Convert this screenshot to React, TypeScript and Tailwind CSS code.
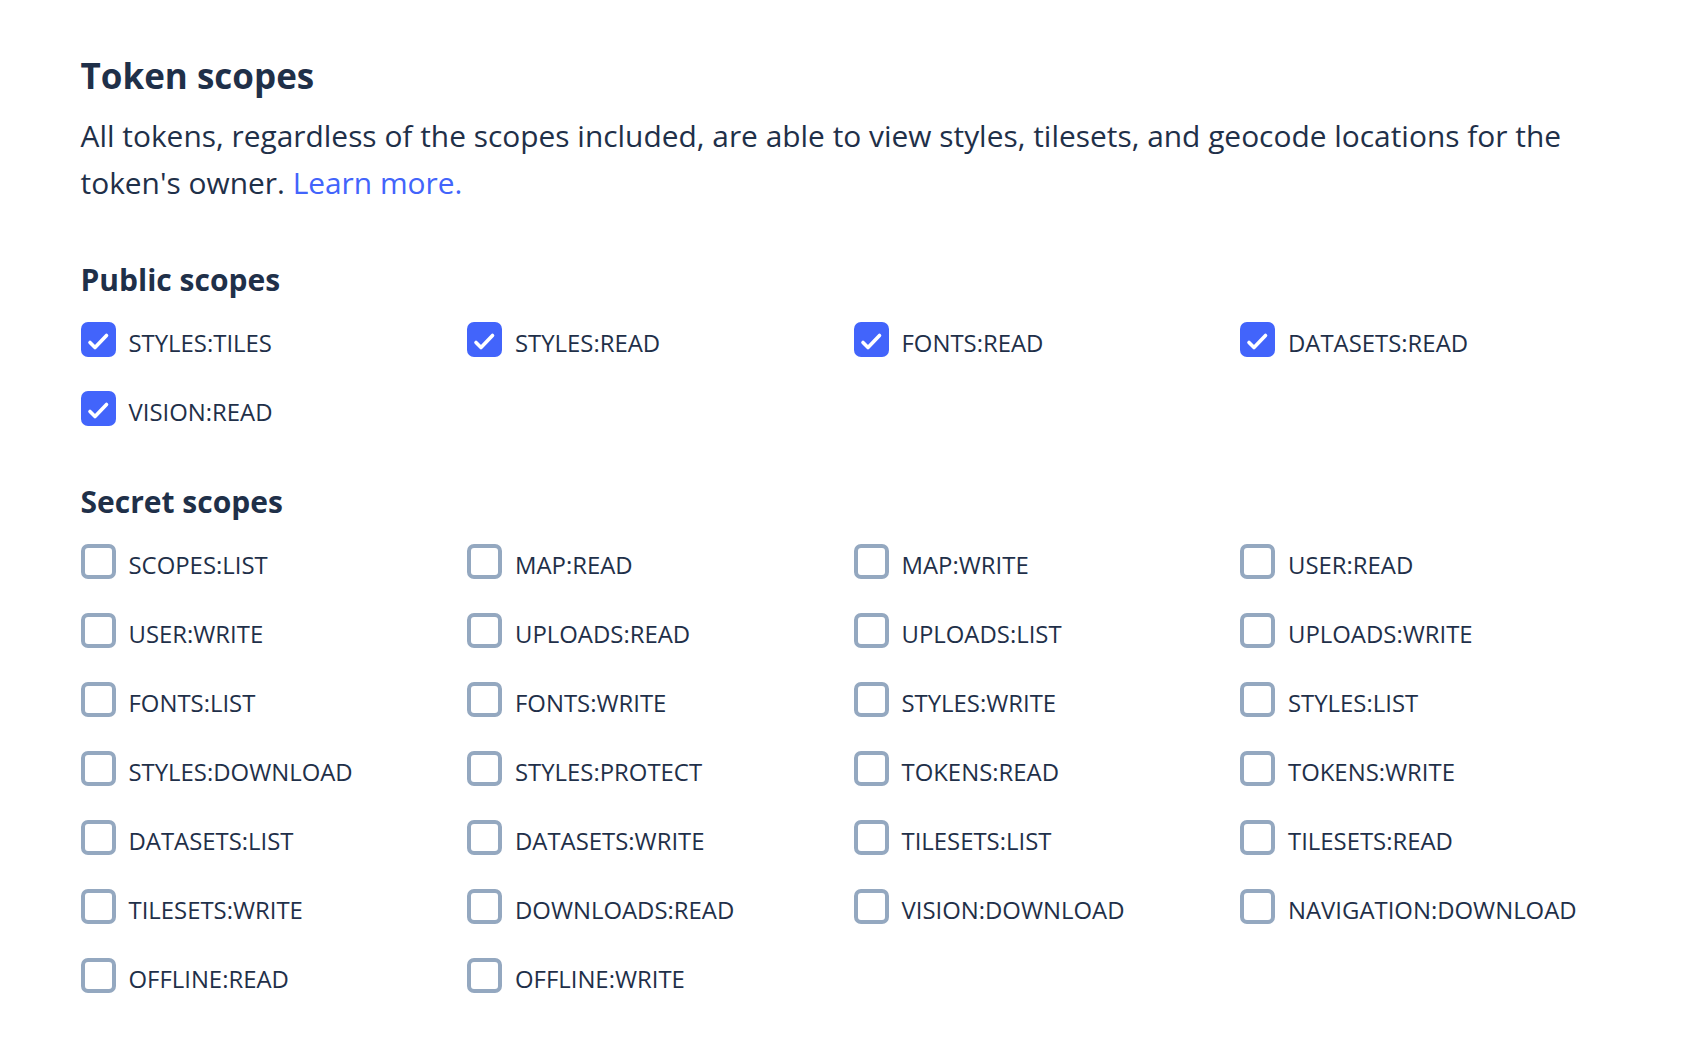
const publicScopes = [
  "STYLES:TILES",
  "STYLES:READ",
  "FONTS:READ",
  "DATASETS:READ",
  "VISION:READ",
];

const secretScopes = [
  "SCOPES:LIST",
  "MAP:READ",
  "MAP:WRITE",
  "USER:READ",
  "USER:WRITE",
  "UPLOADS:READ",
  "UPLOADS:LIST",
  "UPLOADS:WRITE",
  "FONTS:LIST",
  "FONTS:WRITE",
  "STYLES:WRITE",
  "STYLES:LIST",
  "STYLES:DOWNLOAD",
  "STYLES:PROTECT",
  "TOKENS:READ",
  "TOKENS:WRITE",
  "DATASETS:LIST",
  "DATASETS:WRITE",
  "TILESETS:LIST",
  "TILESETS:READ",
  "TILESETS:WRITE",
  "DOWNLOADS:READ",
  "VISION:DOWNLOAD",
  "NAVIGATION:DOWNLOAD",
  "OFFLINE:READ",
  "OFFLINE:WRITE",
];

function Box({ checked }: { checked: boolean }) {
  if (checked) {
    return (
      <span className="flex h-[35px] w-[35px] shrink-0 items-center justify-center rounded-[7px] bg-[#4264fb]">
        <svg width="35" height="35" viewBox="0 0 35 35" fill="none">
          <path
            d="M9 20.5 L14 25.5 L25.5 13.5"
            stroke="white"
            strokeWidth="3.6"
            strokeLinecap="round"
            strokeLinejoin="round"
          />
        </svg>
      </span>
    );
  }
  return (
    <span className="h-[35px] w-[35px] shrink-0 rounded-[7px] border-4 border-[#94a8c0] bg-white" />
  );
}

function Scope({ label, checked }: { label: string; checked: boolean }) {
  return (
    <label className="flex items-start gap-[13px]">
      <Box checked={checked} />
      <span className="mt-[3px] text-[23.9px] leading-[36px] text-[#1f3049]">{label}</span>
    </label>
  );
}

function ScopeGroup({
  title,
  scopes,
  checked,
  className,
}: {
  title: string;
  scopes: string[];
  checked: boolean;
  className: string;
}) {
  return (
    <section className={className}>
      <h2 className="text-[30px] font-bold leading-[36px] text-[#1f3049]">{title}</h2>
      <div className={checked ? "mt-[24px] grid grid-cols-[repeat(4,386.5px)] gap-y-[30px]" : "mt-[24px] grid grid-cols-[repeat(4,386.5px)] gap-y-[30px]"}>
        {scopes.map((s) => (
          <Scope key={s} label={s} checked={checked} />
        ))}
      </div>
    </section>
  );
}

export default function App() {
  return (
    <div className="min-h-[1060px] w-[1700px] bg-white pl-[80.5px] pt-[55px] font-['Open_Sans',sans-serif]">
      <div className="w-[1546px]">
        <h1 className="text-[35px] font-bold leading-[42px] text-[#1f3049]">Token scopes</h1>
        <p className="mt-[15px] text-[29.9px] leading-[47px] text-[#1f3049]">
          All tokens, regardless of the scopes included, are able to view styles, tilesets, and geocode
          locations for the token's owner. <a href="#" className="text-[#4264fb]">Learn more.</a>
        </p>
        <ScopeGroup className="mt-[56px]" title="Public scopes" scopes={publicScopes} checked />
        <ScopeGroup className="mt-[54px]" title="Secret scopes" scopes={secretScopes} checked={false} />
      </div>
    </div>
  );
}
